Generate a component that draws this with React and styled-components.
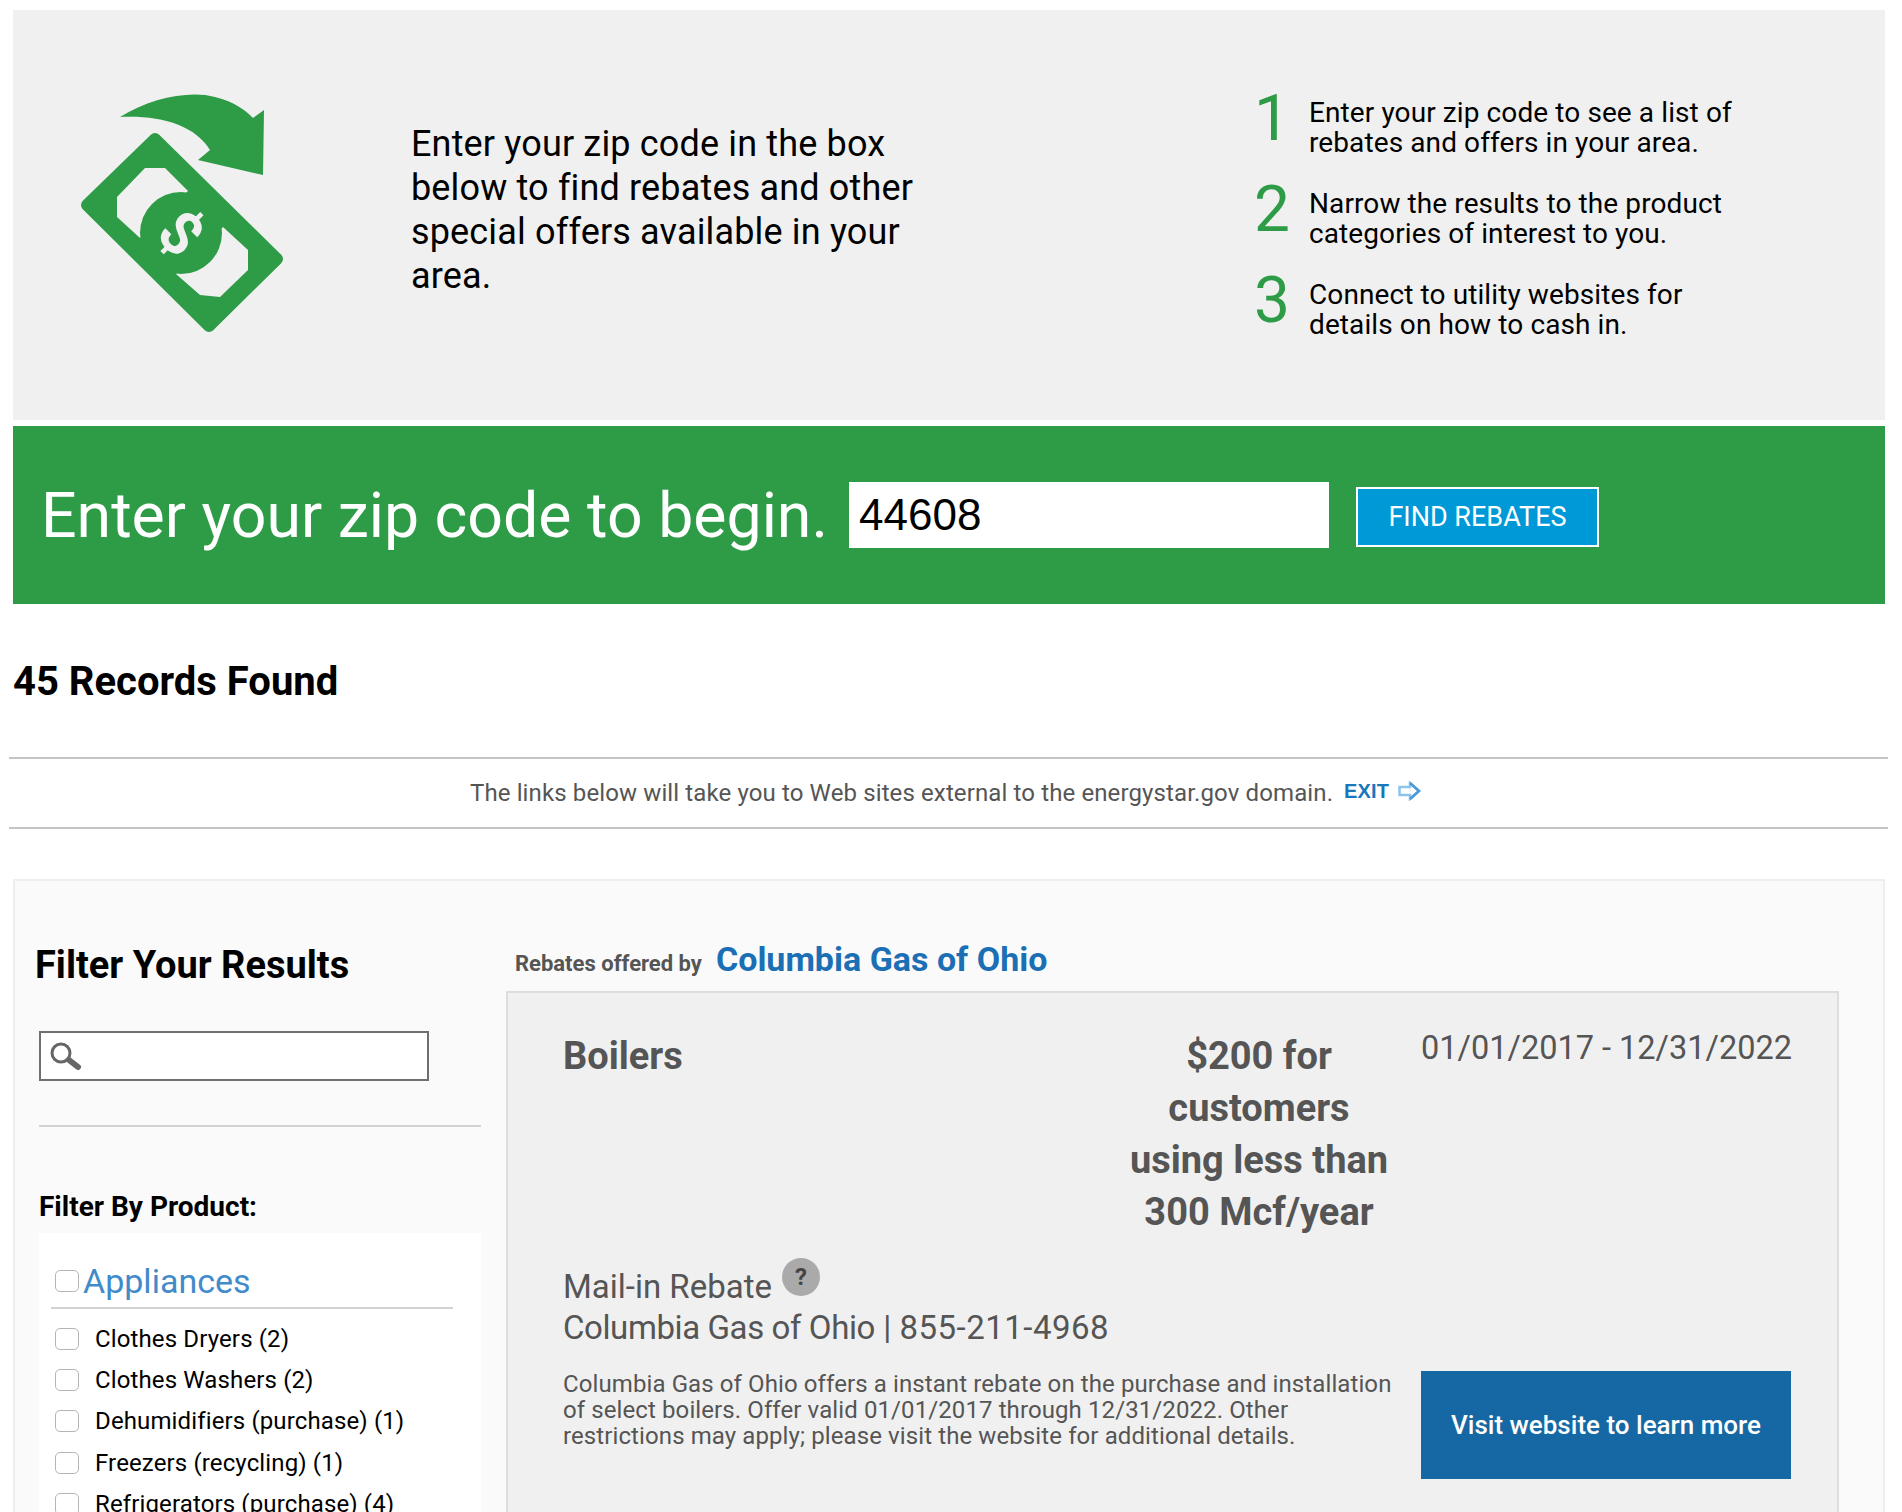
import React from 'react'
import styled, { createGlobalStyle } from 'styled-components'

const GlobalStyle = createGlobalStyle`
  html, body {
    margin: 0;
    padding: 0;
    background: #fff;
    font-family: Roboto, "Liberation Sans", sans-serif;
  }
`

const Page = styled.div`
  width: 1902px;
  height: 1512px;
  overflow: hidden;
  padding-top: 10px;
  box-sizing: border-box;
`

const Intro = styled.section`
  margin-left: 13px;
  width: 1872px;
  height: 410px;
  background: #f0f0f0;
  display: grid;
  grid-template-columns: 398px 843px 1fr;
  align-items: center;
`

const IconCell = styled.div`
  padding-left: 62px;
  display: flex;
`

const IntroText = styled.p`
  margin: 0 0 10px;
  width: 530px;
  font-size: 36px;
  line-height: 44px;
  letter-spacing: 0.16px;
  color: #000;
`

const Steps = styled.ol`
  list-style: none;
  margin: 8px 0 0;
  padding: 0;
  display: flex;
  flex-direction: column;
  gap: 31px;
`

const Step = styled.li`
  display: flex;
  align-items: center;
  height: 60px;
`

const StepNumber = styled.span`
  width: 55px;
  margin-top: -18px;
  font-size: 64px;
  line-height: 60px;
  color: #2e9c47;
`

const StepText = styled.span`
  font-size: 28px;
  line-height: 30px;
  letter-spacing: 0.1px;
  color: #000;
`

const ZipBand = styled.section`
  margin: 6px 0 0 13px;
  width: 1872px;
  height: 178px;
  background: #2e9c47;
  display: flex;
  align-items: center;
  padding-left: 28px;
  box-sizing: border-box;
`

const ZipTitle = styled.h2`
  margin: 0;
  font-size: 62.6px;
  font-weight: 400;
  color: #fff;
  white-space: nowrap;
  width: 808px;
`

const ZipInput = styled.input`
  width: 480px;
  height: 66px;
  border: 0;
  padding: 0 10px;
  box-sizing: border-box;
  font-family: "Liberation Sans", Arial, sans-serif;
  font-size: 44px;
  color: #000;
  background: #fff;
  outline: none;
`

const FindButton = styled.button`
  margin: 4px 0 0 27px;
  width: 243px;
  height: 60px;
  border: 2px solid #fff;
  background: #0099d8;
  color: #fff;
  font-family: inherit;
  font-size: 27px;
  padding: 0;
`

const RecordsTitle = styled.h1`
  margin: 54px 0 0 13px;
  font-size: 40px;
  line-height: 48px;
  font-weight: 700;
  color: #000;
`

const Notice = styled.div`
  margin: 51px 14px 0 9px;
  height: 68px;
  border-top: 2px solid #c4c4c4;
  border-bottom: 2px solid #c4c4c4;
  display: flex;
  align-items: center;
  justify-content: center;
  gap: 11px;
  padding-right: 6px;
  font-size: 24px;
  letter-spacing: 0.12px;
  color: #555;
`

const ExitLink = styled.a`
  display: inline-flex;
  align-items: center;
  gap: 9px;
  font-family: "Liberation Sans", Arial, sans-serif;
  font-size: 20px;
  font-weight: 700;
  color: #1a76bd;
  margin-top: -4px;
`

const Results = styled.section`
  margin: 50px 0 0 13px;
  width: 1872px;
  height: 700px;
  background: #fafafa;
  border: 2px solid #eee;
  border-bottom: 0;
  box-sizing: border-box;
  display: grid;
  grid-template-columns: 491px 1fr;
`

const Sidebar = styled.aside`
  padding: 60px 0 0 24px;
`

const SidebarTitle = styled.h2`
  margin: 0 0 0 -4px;
  font-size: 38px;
  line-height: 48px;
  font-weight: 700;
  color: #000;
`

const SearchBox = styled.div`
  margin-top: 42px;
  width: 390px;
  height: 50px;
  box-sizing: border-box;
  border: 2px solid #6f6f6f;
  background: #fff;
  display: flex;
  align-items: center;
  padding-left: 8px;
`

const SidebarRule = styled.hr`
  margin: 44px 0 0;
  width: 442px;
  border: 0;
  border-top: 2px solid #d2d2d2;
`

const FilterLabel = styled.h3`
  margin: 63px 0 0;
  font-size: 28px;
  line-height: 34px;
  font-weight: 700;
  color: #000;
`

const FilterCard = styled.div`
  margin-top: 9px;
  width: 442px;
  background: #fff;
  padding: 21px 0 0 12px;
  box-sizing: border-box;
`

const CategoryRow = styled.div`
  width: 402px;
  height: 55px;
  border-bottom: 2px solid #d2d2d2;
  display: flex;
  align-items: center;
  padding-left: 4px;
  box-sizing: border-box;
`

const CategoryName = styled.span`
  margin-left: 4px;
  font-size: 34px;
  color: #428bca;
`

const CheckBox = styled.input.attrs({ type: 'checkbox' })`
  appearance: none;
  margin: 0;
  flex: none;
  width: 24px;
  height: 22px;
  border: 1px solid #b5b5b5;
  border-radius: 5px;
  background: #fff;
`

const ProductList = styled.ul`
  list-style: none;
  margin: 9px 0 0;
  padding: 0 0 0 4px;
`

const ProductRow = styled.li`
  height: 41.3px;
  display: flex;
  align-items: center;
  gap: 16px;
  font-size: 24px;
  letter-spacing: 0.13px;
  color: #000;
`

const Offers = styled.div`
  padding: 58px 0 0 9px;
`

const OfferedBy = styled.div`
  display: flex;
  align-items: baseline;
  gap: 14px;
  font-size: 22px;
  font-weight: 700;
  color: #555;
  height: 52px;
`

const Provider = styled.span`
  font-size: 34px;
  font-weight: 700;
  color: #1a6fb5;
`

const OfferCard = styled.article`
  margin-left: -9px;
  width: 1333px;
  height: 700px;
  box-sizing: border-box;
  background: #f0f0f0;
  border: 2px solid #ddd;
  padding: 37px 45px 0 55px;
  color: #555;
`

const OfferTop = styled.div`
  display: grid;
  grid-template-columns: 561px 270px 1fr;
  column-gap: 0;
`

const OfferName = styled.h3`
  margin: 0;
  font-size: 38px;
  line-height: 52px;
  font-weight: 700;
`

const OfferAmount = styled.div`
  font-size: 38px;
  line-height: 52px;
  font-weight: 700;
  text-align: center;
`

const OfferDates = styled.div`
  margin-top: -4px;
  padding-left: 27px;
  font-size: 32.5px;
  line-height: 44px;
  white-space: nowrap;
`

const OfferMeta = styled.div`
  margin-top: 27px;
  font-size: 33px;
  line-height: 41px;
`

const ContactName = styled.span`
  letter-spacing: -0.4px;
`

const ContactPhone = styled.span`
  letter-spacing: 0.5px;
`

const HelpBadge = styled.span`
  position: relative;
  top: -7px;
  display: inline-flex;
  align-items: center;
  justify-content: center;
  width: 38px;
  height: 38px;
  margin-left: 10px;
  border-radius: 50%;
  background: #aaa;
  color: #444;
  font-size: 24px;
  font-weight: 700;
  vertical-align: 6px;
`

const OfferBottom = styled.div`
  margin-top: 23px;
  display: grid;
  grid-template-columns: 830px 370px;
  column-gap: 28px;
  align-items: start;
`

const OfferDescription = styled.p`
  margin: 0;
  font-size: 24px;
  line-height: 26px;
  letter-spacing: 0.1px;
`

const VisitButton = styled.a`
  display: flex;
  align-items: center;
  justify-content: center;
  height: 108px;
  background: #1568a3;
  color: #fff;
  font-size: 26px;
  font-weight: 500;
`

const steps = [
  ['Enter your zip code to see a list of', 'rebates and offers in your area.'],
  ['Narrow the results to the product', 'categories of interest to you.'],
  ['Connect to utility websites for', 'details on how to cash in.'],
]

const products = [
  'Clothes Dryers (2)',
  'Clothes Washers (2)',
  'Dehumidifiers (purchase) (1)',
  'Freezers (recycling) (1)',
  'Refrigerators (purchase) (4)',
]

function MoneyIcon() {
  return (
    <svg width="216" height="250" viewBox="75 90 216 250">
      <path
        d="M120 117 C150 98 190 90 215 97 C235 102 245 110 253 118 L264 110 L263 175 L198 160 L210 150 C195 125 160 115 120 117 Z"
        fill="#2e9c47"
      />
      <polygon
        points="155,139 87,205 209,326 277,259"
        fill="#2e9c47"
        stroke="#2e9c47"
        strokeWidth="12"
        strokeLinejoin="round"
      />
      <polygon
        points="145,168 165,168 188,191 140,238 117,217 117,197"
        fill="#f0f0f0"
      />
      <polygon
        points="223,227 248,250 248,270 220,297 200,295 176,274"
        fill="#f0f0f0"
      />
      <circle cx="181" cy="233" r="41" fill="#2e9c47" />
      <text
        x="181"
        y="254"
        fontFamily="Roboto, sans-serif"
        fontSize="60"
        fontWeight="700"
        fill="#f0f0f0"
        textAnchor="middle"
        transform="rotate(45 181 233)"
      >
        $
      </text>
    </svg>
  )
}

function SearchIcon() {
  return (
    <svg width="34" height="30" viewBox="0 0 34 30">
      <circle cx="12" cy="12" r="9" fill="#fff" stroke="#666" strokeWidth="3" />
      <line x1="20" y1="19" x2="29" y2="26" stroke="#666" strokeWidth="6" strokeLinecap="round" />
    </svg>
  )
}

function ExitArrow() {
  return (
    <svg width="23" height="20" viewBox="0 0 23 20">
      <path
        d="M1.5 6 H12 V2 L21 10 L12 18 V14 H1.5 Z"
        fill="#fff"
        stroke="#8cc4ec"
        strokeWidth="2.5"
      />
      <path d="M12 2 L21 10 L12 18" fill="none" stroke="#4a9ad8" strokeWidth="2.5" />
    </svg>
  )
}

export default function App() {
  return (
    <Page>
      <GlobalStyle />
      <Intro>
        <IconCell>
          <MoneyIcon />
        </IconCell>
        <IntroText>
          Enter your zip code in the box below to find rebates and other special offers available in your area.
        </IntroText>
        <Steps>
          {steps.map((lines, idx) => (
            <Step key={idx}>
              <StepNumber>{idx + 1}</StepNumber>
              <StepText>
                {lines[0]}
                <br />
                {lines[1]}
              </StepText>
            </Step>
          ))}
        </Steps>
      </Intro>
      <ZipBand>
        <ZipTitle>Enter your zip code to begin.</ZipTitle>
        <ZipInput defaultValue="44608" />
        <FindButton>FIND REBATES</FindButton>
      </ZipBand>
      <RecordsTitle>45 Records Found</RecordsTitle>
      <Notice>
        <span>The links below will take you to Web sites external to the energystar.gov domain.</span>
        <ExitLink>
          EXIT
          <ExitArrow />
        </ExitLink>
      </Notice>
      <Results>
        <Sidebar>
          <SidebarTitle>Filter Your Results</SidebarTitle>
          <SearchBox>
            <SearchIcon />
          </SearchBox>
          <SidebarRule />
          <FilterLabel>Filter By Product:</FilterLabel>
          <FilterCard>
            <CategoryRow>
              <CheckBox />
              <CategoryName>Appliances</CategoryName>
            </CategoryRow>
            <ProductList>
              {products.map((name) => (
                <ProductRow key={name}>
                  <CheckBox />
                  {name}
                </ProductRow>
              ))}
            </ProductList>
          </FilterCard>
        </Sidebar>
        <Offers>
          <OfferedBy>
            Rebates offered by
            <Provider>Columbia Gas of Ohio</Provider>
          </OfferedBy>
          <OfferCard>
            <OfferTop>
              <OfferName>Boilers</OfferName>
              <OfferAmount>$200 for customers using less than 300 Mcf/year</OfferAmount>
              <OfferDates>01/01/2017 - 12/31/2022</OfferDates>
            </OfferTop>
            <OfferMeta>
              Mail-in Rebate
              <HelpBadge>?</HelpBadge>
              <br />
              <ContactName>Columbia Gas of Ohio</ContactName> | <ContactPhone>855-211-4968</ContactPhone>
            </OfferMeta>
            <OfferBottom>
              <OfferDescription>
                Columbia Gas of Ohio offers a instant rebate on the purchase and installation of select boilers. Offer valid 01/01/2017 through 12/31/2022. Other restrictions may apply; please visit the website for additional details.
              </OfferDescription>
              <VisitButton>Visit website to learn more</VisitButton>
            </OfferBottom>
          </OfferCard>
        </Offers>
      </Results>
    </Page>
  )
}
